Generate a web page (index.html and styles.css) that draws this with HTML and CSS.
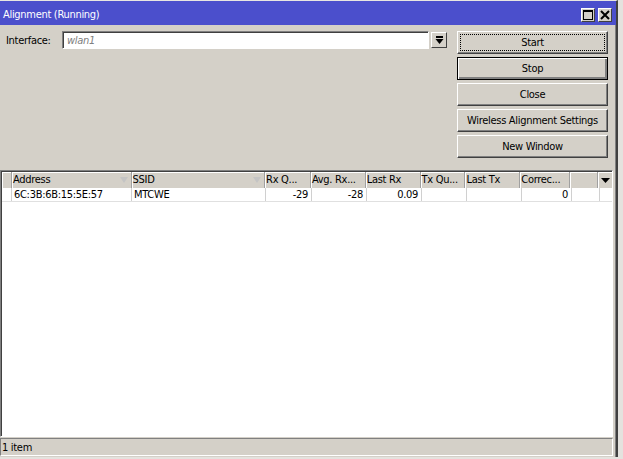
FILE: index.html
```html
<!DOCTYPE html>
<html>
<head>
<meta charset="utf-8">
<link rel="stylesheet" href="styles.css">
</head>
<body>
<div class="window">
  <div class="titlebar">
    <span class="title">Alignment (Running)</span>
    <div class="tbtns">
      <span class="tbtn"><svg width="10" height="10" viewBox="0 0 10 10"><rect x="0.5" y="0.5" width="9" height="9" fill="none" stroke="#000"/><rect x="0" y="0" width="10" height="2" fill="#000"/></svg></span>
      <span class="tbtn"><svg width="10" height="10" viewBox="0 0 10 10"><path d="M1 1 L9 9 M9 1 L1 9" stroke="#000" stroke-width="2"/></svg></span>
    </div>
  </div>
  <div class="top">
    <div class="form">
      <label class="lbl">Interface:</label>
      <div class="input">wlan1</div>
      <span class="ddbtn"><svg width="9" height="9" viewBox="0 0 9 9"><rect x="1" y="0" width="7" height="2" fill="#000"/><path d="M0.5 3 H8.5 L4.5 8 Z" fill="#000"/></svg></span>
    </div>
    <div class="buttons">
      <div class="btn focus"><span>Start</span></div>
      <div class="btn def"><span>Stop</span></div>
      <div class="btn"><span>Close</span></div>
      <div class="btn"><span>Wireless Alignment Settings</span></div>
      <div class="btn"><span>New Window</span></div>
    </div>
  </div>
  <div class="table">
    <div class="hdr">
      <div class="c c0"></div>
      <div class="c c1">Address<span class="sort"></span></div>
      <div class="c c2">SSID<span class="sort"></span></div>
      <div class="c c3">Rx Q...</div>
      <div class="c c4">Avg. Rx...</div>
      <div class="c c5">Last Rx</div>
      <div class="c c6">Tx Qu...</div>
      <div class="c c7">Last Tx</div>
      <div class="c c8">Correc...</div>
      <div class="c c9"></div>
      <div class="c c10"><svg width="9" height="5" viewBox="0 0 9 5"><path d="M0 0 H9 L4.5 5 Z" fill="#000"/></svg></div>
    </div>
    <div class="row">
      <div class="c c0"></div>
      <div class="c c1">6C:3B:6B:15:5E:57</div>
      <div class="c c2">MTCWE</div>
      <div class="c c3 r">-29</div>
      <div class="c c4 r">-28</div>
      <div class="c c5 r">0.09</div>
      <div class="c c6"></div>
      <div class="c c7"></div>
      <div class="c c8 r">0</div>
      <div class="c c9"></div>
    </div>
  </div>
  <div class="status">1 item</div>
</div>
</body>
</html>
```
FILE: styles.css
```css
* { box-sizing: border-box; }
html, body { margin: 0; padding: 0; }
body {
  background: #e4e2de;
  font-family: "DejaVu Sans Condensed", "DejaVu Sans", sans-serif;
  font-size: 11px;
  letter-spacing: -0.3px;
  color: #000;
  width: 623px;
  height: 459px;
  overflow: hidden;
}
.window {
  width: 618px;
  height: 457px;
  background: #d4d0c8;
  border-top: 1px solid #e8e6e2;
  border-right: 2px solid #404040;
  box-shadow: inset -1px 0 0 #808080;
  display: flex;
  flex-direction: column;
}
.titlebar {
  height: 24px;
  background: #4b4fcc;
  display: flex;
  align-items: center;
  justify-content: space-between;
  padding: 0 4px 0 3px;
  flex: none;
}
.title {
  color: #fff;
  font-size: 11px;
  padding-top: 2px;
}
.tbtns { display: flex; gap: 3px; padding-top: 3px; }
.tbtn {
  width: 14px; height: 14px;
  background: #d4d0c8;
  border: 1px solid;
  border-color: #fff #404040 #404040 #fff;
  display: flex; align-items: center; justify-content: center;
}
.top {
  height: 145px;
  display: flex;
  justify-content: space-between;
  padding: 6px 8px 0 6px;
  flex: none;
}
.form { display: flex; align-items: flex-start; }
.lbl { margin-top: 3px; width: 56px; }
.input {
  width: 367px; height: 18px;
  background: #fff;
  border: 1px solid;
  border-color: #808080 #fff #fff #808080;
  box-shadow: inset 1px 1px 0 #404040;
  color: #808080;
  font-style: italic;
  padding: 2px 0 0 4px;
}
.ddbtn {
  width: 16px; height: 16px;
  margin: 1px 0 0 2px;
  border: 1px solid;
  border-color: #fff #404040 #404040 #fff;
  display: flex; align-items: center; justify-content: center;
}
.buttons { display: flex; flex-direction: column; gap: 3px; width: 151px; }
.btn {
  height: 23px;
  border: 1px solid;
  border-color: #fff #404040 #404040 #fff;
  box-shadow: inset -1px -1px 0 #808080;
  display: flex; align-items: center; justify-content: center;
}
.btn.def { border-color: #000; box-shadow: inset 1px 1px 0 #fff, inset -2px -2px 0 #808080; }
.btn.focus { border-color: #fff #404040 #404040 #fff; padding: 2px; }
.btn.focus span {
  flex: 1; align-self: stretch;
  border: 1px dotted #000;
  display: flex; align-items: center; justify-content: center;
}
.table {
  flex: 1;
  margin-right: 3px;
  background: #fff;
  border: 1px solid;
  border-color: #808080 #fff #fff #808080;
  box-shadow: inset 1px 1px 0 #404040;
  padding: 1px 0 0 1px;
}
.hdr, .row { display: flex; }
.hdr { height: 16px; background: #d4d0c8; }
.row { height: 14px; border-bottom: 1px solid #e0e0e0; }
.c {
  position: relative;
  white-space: nowrap;
  overflow: hidden;
  padding-left: 1px;
  border-right: 1px solid #a0a0a0;
  line-height: 16px;
}
.row .c { line-height: 14px; border-right-color: #d0d0d0; padding-left: 2px; }
.hdr .c { box-shadow: inset 1px 1px 0 #fff; }
.r { text-align: right; padding-right: 3px; }
.row .r { padding-right: 3px; }
.c0 { width: 10px; }
.c1 { width: 120px; }
.c2 { width: 134px; }
.c3 { width: 46px; }
.c4 { width: 55px; }
.c5 { width: 55px; }
.c6 { width: 45px; }
.c7 { width: 55px; }
.c8 { width: 50px; }
.c9 { width: 28px; }
.c10 { width: 14px; border-right: none; display: flex; align-items: center; justify-content: center; }
.sort {
  position: absolute;
  right: 3px; top: 5px;
  width: 0; height: 0;
  border-left: 4px solid transparent;
  border-right: 4px solid transparent;
  border-top: 6px solid #c4c4c4;
}
.status {
  height: 18px;
  margin: 1px 3px 1px 0;
  padding: 2px 0 0 1px;
  border: 1px solid;
  border-color: #808080 #fff #fff #808080;
  flex: none;
}
```
